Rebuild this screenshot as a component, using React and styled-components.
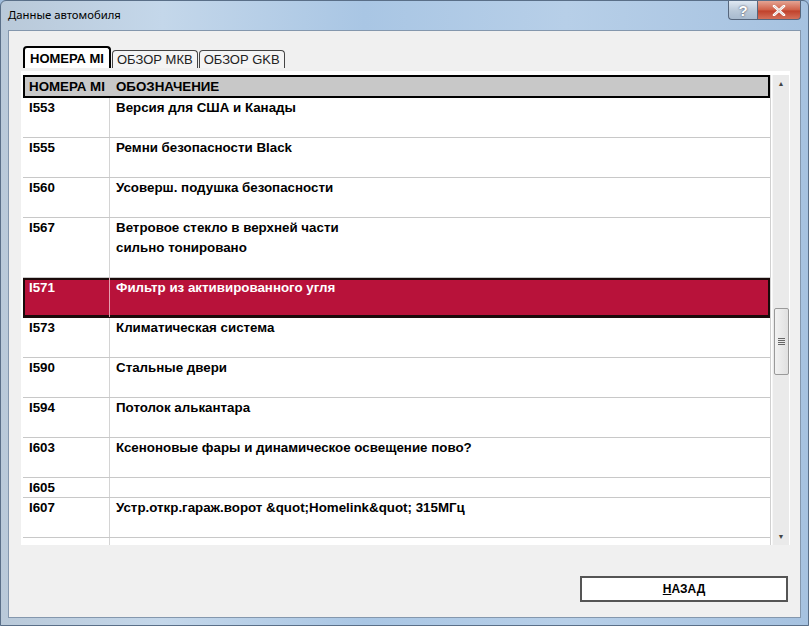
import React from 'react';
import styled, { createGlobalStyle } from 'styled-components';

const GlobalStyle = createGlobalStyle`
  html, body { margin: 0; padding: 0; background: #9fbcdc; }
  * { box-sizing: border-box; }
`;

const rows = [
  { code: 'I553', text: 'Версия для США и Канады', h: 40 },
  { code: 'I555', text: 'Ремни безопасности Black', h: 40 },
  { code: 'I560', text: 'Усоверш. подушка безопасности', h: 40 },
  { code: 'I567', text: 'Ветровое стекло в верхней части\nсильно тонировано', h: 60 },
  { code: 'I571', text: 'Фильтр из активированного угля', h: 40, selected: true },
  { code: 'I573', text: 'Климатическая система', h: 40 },
  { code: 'I590', text: 'Стальные двери', h: 40 },
  { code: 'I594', text: 'Потолок алькантара', h: 40 },
  { code: 'I603', text: 'Ксеноновые фары и динамическое освещение пово?', h: 40 },
  { code: 'I605', text: '', h: 20 },
  { code: 'I607', text: 'Устр.откр.гараж.ворот &quot;Homelink&quot; 315МГц', h: 40 },
  { code: '', text: '', h: 20 },
];

const App = () => (
  <>
    <GlobalStyle />
    <Window>
      <TitleBar>
        <Title>Данные автомобиля</Title>
        <Caption>
          <HelpBtn>?</HelpBtn>
          <CloseBtn>
            <svg width="14" height="11" viewBox="0 0 14 11">
              <path d="M2 1 L12 10 M12 1 L2 10" stroke="#fff" strokeWidth="2.6" strokeLinecap="round" />
              <path d="M2 1 L12 10 M12 1 L2 10" stroke="#5a2218" strokeWidth="0.6" fill="none" opacity="0.4" />
            </svg>
          </CloseBtn>
        </Caption>
      </TitleBar>
      <Client>
        <Tabs>
          <Tab $active>НОМЕРА MI</Tab>
          <Tab>ОБЗОР МКВ</Tab>
          <Tab>ОБЗОР GKB</Tab>
        </Tabs>
        <GridPanel>
          <TableArea>
            <HeaderRow>
              <CodeCell $head>НОМЕРА MI</CodeCell>
              <DescCell $head>ОБОЗНАЧЕНИЕ</DescCell>
            </HeaderRow>
            {rows.map((r, i) => (
              <Row key={i} $selected={r.selected} style={{ height: r.h }}>
                <CodeCell $selected={r.selected}>{r.code}</CodeCell>
                <DescCell>{r.text}</DescCell>
              </Row>
            ))}
          </TableArea>
          <ScrollBar>
            <Arrow>▲</Arrow>
            <Track>
              <Thumb>
                <Grip />
              </Thumb>
            </Track>
            <Arrow>▼</Arrow>
          </ScrollBar>
        </GridPanel>
        <Footer>
          <BackButton>
            <u>Н</u>АЗАД
          </BackButton>
        </Footer>
      </Client>
    </Window>
  </>
);

export default App;

const Window = styled.div`
  width: 809px;
  height: 626px;
  display: flex;
  flex-direction: column;
  background: linear-gradient(90deg, #b9c9d9 0%, #c4d7ea 20%, #a9c6e4 45%, #b7cfe8 70%, #a6c2e0 100%);
  border: 1px solid #5a6f88;
  border-radius: 6px 6px 0 0;
  font-family: 'Liberation Sans', Arial, sans-serif;
`;

const TitleBar = styled.div`
  height: 29px;
  display: flex;
  justify-content: space-between;
  align-items: flex-start;
  padding-left: 7px;
  flex-shrink: 0;
`;

const Title = styled.div`
  font-family: 'Noto Sans', 'Liberation Sans', sans-serif;
  font-size: 11.3px;
  color: #000;
  margin-top: 6px;
`;

const Caption = styled.div`
  display: flex;
  margin-right: 7px;
`;

const HelpBtn = styled.div`
  width: 29px;
  height: 19px;
  border: 1px solid #56667c;
  border-top: none;
  border-right: none;
  border-radius: 0 0 0 4px;
  background: linear-gradient(#dfe8f2, #b9c8d8 55%, #a8bace);
  color: #fff;
  font-size: 15px;
  font-weight: bold;
  display: flex;
  align-items: center;
  justify-content: center;
  text-shadow: 0 0 2px #334;
`;

const CloseBtn = styled.div`
  width: 44px;
  height: 19px;
  border: 1px solid #56667c;
  border-top: none;
  border-radius: 0 0 4px 0;
  background: linear-gradient(#e4a493, #cf6048 50%, #c0412b 55%, #d4705a);
  display: flex;
  align-items: center;
  justify-content: center;
`;

const Client = styled.div`
  flex: 1;
  margin: 0 7px 7px 7px;
  background: #f0f0f0;
  border: 1px solid #8497ad;
  display: flex;
  flex-direction: column;
  padding: 15px 10px 15px 12px;
`;

const Tabs = styled.div`
  display: flex;
  align-items: flex-end;
  height: 22px;
  padding-left: 2px;
`;

const Tab = styled.div`
  height: ${p => (p.$active ? '22px' : '18px')};
  padding: 0 ${p => (p.$active ? '5px' : '4px')};
  margin-right: 1px;
  border: ${p => (p.$active ? '2px solid #000' : '1px solid #444')};
  border-bottom: none;
  border-radius: 4px 4px 0 0;
  background: ${p => (p.$active ? '#fff' : '#f4f4f4')};
  font-size: 13px;
  font-weight: ${p => (p.$active ? 'bold' : 'normal')};
  color: ${p => (p.$active ? '#000' : '#222')};
  display: flex;
  align-items: center;
  white-space: nowrap;
`;

const GridPanel = styled.div`
  display: flex;
  height: 474px;
  margin-top: 3px;
  background: #fff;
  padding: 4px 1px 0 2px;
  overflow: hidden;
`;

const TableArea = styled.div`
  flex: 1;
  overflow: hidden;
  border-right: 1px solid #d0d0d0;
`;

const Row = styled.div`
  display: flex;
  color: ${p => (p.$selected ? '#fff' : '#000')};
  background: ${p => (p.$selected ? '#b8123a' : '#fff')};
  box-shadow: ${p => (p.$selected ? 'inset 0 0 0 2px #1a0a0a' : 'none')};
  border-bottom: 1px solid ${p => (p.$selected ? '#1a0a0a' : '#c8c8c8')};
  font-size: 13.33px;
  font-weight: bold;
  line-height: 20px;
`;

const HeaderRow = styled.div`
  display: flex;
  height: 23px;
  background: #c8c8c8;
  border: 2px solid #000;
  align-items: center;
  font-size: 13.33px;
  font-weight: bold;
`;

const CodeCell = styled.div`
  width: ${p => (p.$head ? '85px' : '87px')};
  flex-shrink: 0;
  padding-left: ${p => (p.$head ? '4px' : '6px')};
  border-right: ${p => (p.$head ? 'none' : p.$selected ? '1px solid #e6a0b0' : '1px solid #d4d4d4')};
  white-space: pre;
`;

const DescCell = styled.div`
  flex: 1;
  padding-left: 6px;
  white-space: pre;
`;

const ScrollBar = styled.div`
  width: 17px;
  margin-left: 1px;
  background: #eaeaea;
  border-left: 1px solid #f6f6f6;
  display: flex;
  flex-direction: column;
`;

const Arrow = styled.div`
  height: 17px;
  font-size: 7px;
  color: #444;
  display: flex;
  align-items: center;
  justify-content: center;
`;

const Track = styled.div`
  flex: 1;
  padding-top: 216px;
`;

const Thumb = styled.div`
  width: 15px;
  height: 67px;
  margin-left: 1px;
  border: 1px solid #9a9a9a;
  border-radius: 2px;
  background: linear-gradient(90deg, #f2f2f2, #e0e0e0);
  display: flex;
  align-items: center;
  justify-content: center;
`;

const Grip = styled.div`
  width: 7px;
  height: 7px;
  background: repeating-linear-gradient(#666 0 1px, transparent 1px 2px);
`;

const Footer = styled.div`
  flex: 1;
  display: flex;
  justify-content: flex-end;
  align-items: flex-end;
`;

const BackButton = styled.div`
  width: 208px;
  height: 26px;
  border: 2px solid #555;
  background: #fff;
  font-size: 12px;
  font-weight: bold;
  display: flex;
  align-items: center;
  justify-content: center;
  margin-right: 2px;
`;
